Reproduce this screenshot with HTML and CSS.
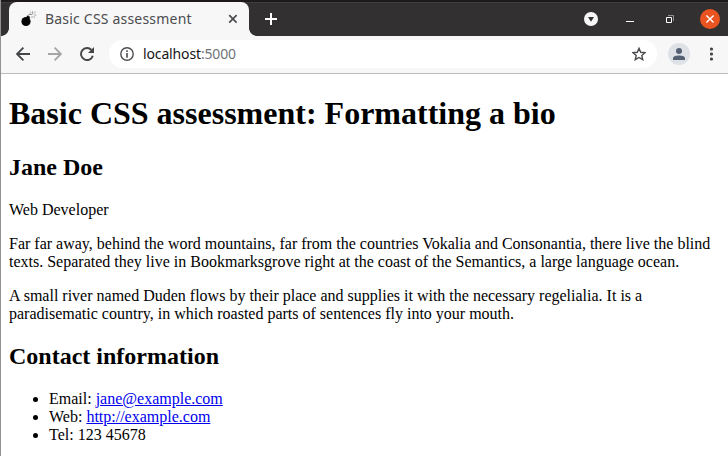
FILE: index.html
```html
<!DOCTYPE html>
<html lang="en">
<head>
<meta charset="utf-8">
<title>Basic CSS assessment</title>
<link rel="stylesheet" href="styles.css">
</head>
<body>
<div class="window">
  <header class="tabstrip">
    <div class="edge edge-left"></div>
    <div class="tab">
      <svg class="favicon" width="16" height="16" viewBox="0 0 16 16">
        <circle cx="5" cy="10.5" r="4.6" fill="#050505"/>
        <path d="M6 4.5l3 1.2-.6 2.3-3-1.5z" fill="#050505"/>
        <path d="M7.2 4.7Q8 2 10.7 3.6" fill="none" stroke="#777" stroke-width="1"/>
        <path d="M11.5 3.5V0M12.5 2.5l2.3-1.8M13 4h2.5M12.5 5l1.5 2M10.5 2L9 .8M11 5v2" stroke="#999" stroke-width=".8"/>
      </svg>
      <span class="tab-title">Basic CSS assessment</span>
      <svg class="tab-close" width="10" height="10" viewBox="0 0 10 10"><path d="M1.2 1.2l7.4 7.4M8.6 1.2L1.2 8.6" stroke="#4b4c4f" stroke-width="1.7"/></svg>
    </div>
    <div class="edge edge-right"></div>
    <svg class="new-tab" width="12" height="12" viewBox="0 0 12 12"><path d="M6 0v12M0 6h12" stroke="#fff" stroke-width="2"/></svg>
    <div class="controls">
      <svg width="14" height="14" viewBox="0 0 14 14"><circle cx="7" cy="7" r="7" fill="#f7f7f7"/><path d="M4 5h6L7 9.7z" fill="#333031"/></svg>
      <svg class="minimize" width="8" height="1" viewBox="0 0 8 1"><path d="M0 0h8v1H0z" fill="#fff"/></svg>
      <svg class="restore" width="8" height="8" viewBox="0 0 8 8"><path d="M2 .5h5.5V6" fill="none" stroke="#929091"/><path d="M.5 2.5h5v5h-5z" fill="none" stroke="#fff"/></svg>
      <svg class="close" width="20" height="20" viewBox="0 0 20 20"><circle cx="10" cy="10" r="10" fill="#e95420"/><path d="M6.4 6.4l7.2 7.2M13.6 6.4l-7.2 7.2" stroke="#fff" stroke-width="1.4"/></svg>
    </div>
  </header>
  <nav class="toolbar">
    <svg class="back" width="14" height="14" viewBox="0 0 14 14"><path d="M14 7H1.5M7.4.7L1.1 7l6.3 6.3" fill="none" stroke="#444547" stroke-width="1.8"/></svg>
    <svg class="forward" width="14" height="14" viewBox="0 0 14 14"><path d="M0 7h12.5M6.6.7L12.9 7l-6.3 6.3" fill="none" stroke="#a4a5a6" stroke-width="1.8"/></svg>
    <svg class="reload" width="14" height="14" viewBox="0 0 14 14"><path d="M12.8 8.7A6 6 0 1 1 11.5 3" fill="none" stroke="#444547" stroke-width="1.9"/><path d="M14 0v6H8z" fill="#444547"/></svg>
    <div class="address">
      <svg class="info" width="14" height="14" viewBox="0 0 14 14"><circle cx="7" cy="7" r="6.2" fill="none" stroke="#4c4d50" stroke-width="1.4"/><path d="M7 3.3v1.6M7 6v4.8" stroke="#4c4d50" stroke-width="1.6"/></svg>
      <span class="url">localhost<span class="port">:5000</span></span>
      <svg class="star" width="14" height="14" viewBox="0 0 14 14"><path d="M7 1.3l1.7 4 4.3.4-3.2 2.8.95 4.2L7 10.5l-3.75 2.2.95-4.2L1 5.7l4.3-.4z" fill="none" stroke="#4b4c4f" stroke-width="1.4"/></svg>
    </div>
    <svg class="avatar" width="22" height="22" viewBox="0 0 22 22"><circle cx="11" cy="11" r="11" fill="#dee1e6"/><circle cx="11" cy="8" r="3" fill="#556073"/><path d="M5 17v-1.6C5 13.1 8.5 12.5 11 12.5s6 .6 6 2.9V17z" fill="#556073"/></svg>
    <svg class="menu" width="4" height="14" viewBox="0 0 4 14"><g fill="#444547"><circle cx="1.5" cy="2" r="1.6"/><circle cx="1.5" cy="7" r="1.6"/><circle cx="1.5" cy="12" r="1.6"/></g></svg>
  </nav>
  <main class="page">
    <h1>Basic CSS assessment: Formatting a bio</h1>
    <h2>Jane Doe</h2>
    <p>Web Developer</p>
    <p>Far far away, behind the word mountains, far from the countries Vokalia and Consonantia, there live the blind texts. Separated they live in Bookmarksgrove right at the coast of the Semantics, a large language ocean.</p>
    <p>A small river named Duden flows by their place and supplies it with the necessary regelialia. It is a paradisematic country, in which roasted parts of sentences fly into your mouth.</p>
    <h2>Contact information</h2>
    <ul>
      <li>Email: <a href="mailto:jane@example.com">jane@example.com</a></li>
      <li>Web: <a href="http://example.com">http://example.com</a></li>
      <li>Tel: 123 45678</li>
    </ul>
  </main>
</div>
</body>
</html>
```
FILE: styles.css
```css
* {
  box-sizing: border-box;
}

body {
  margin: 0;
  background: #fff;
}

svg {
  display: block;
  flex: none;
}

.window {
  height: 456px;
  overflow: hidden;
  border-left: 1px solid #929292;
}

.tabstrip {
  display: flex;
  height: 36px;
  padding-top: 2px;
  background: #333031;
  box-shadow: inset 0 2px #1e1a1b, inset 0 3px #403d3e;
}

.edge {
  align-self: flex-end;
  width: 8px;
  height: 8px;
}

.edge-left {
  background: radial-gradient(circle at 0 0, #333031 7.5px, #f7f7f7 8.3px);
}

.edge-right {
  background: radial-gradient(circle at 100% 0, #333031 7.5px, #f7f7f7 8.3px);
}

.tab {
  display: flex;
  align-items: center;
  width: 240px;
  padding: 0 11px 0 12px;
  background: #f7f7f7;
  border-radius: 8px 8px 0 0;
}

.tab-title,
.url {
  font-family: "Noto Sans", sans-serif;
  white-space: nowrap;
}

.tab-title {
  margin-left: 8px;
  font-size: 14px;
  line-height: 20px;
  letter-spacing: 0.2px;
  color: #4b4c4f;
}

.tab-close {
  margin-left: auto;
}

.new-tab {
  align-self: center;
  margin-left: 8px;
}

.controls {
  display: flex;
  align-items: center;
  margin-left: auto;
  margin-right: 8px;
}

.minimize {
  margin: 4px 0 0 28px;
}

.restore {
  margin-left: 32px;
}

.close {
  margin-left: 26px;
}

.toolbar {
  display: flex;
  align-items: center;
  height: 38px;
  padding: 0 14px 1px 15px;
  background: #f7f7f7;
  border-bottom: 1px solid #bdbdbd;
}

.forward,
.reload {
  margin-left: 18px;
}

.address {
  display: flex;
  align-items: center;
  flex: 1;
  height: 28px;
  margin-left: 15px;
  padding: 0 11px;
  border-radius: 14px;
  background: #fff;
}

.url {
  margin-left: 9px;
  font-size: 14px;
  line-height: 20px;
  letter-spacing: -0.14px;
  color: #151515;
}

.port {
  color: #707378;
}

.star {
  margin-left: auto;
}

.avatar {
  margin-left: 11px;
}

.menu {
  margin-left: 20px;
}

.page {
  display: flow-root;
  padding: 0 8px;
  font: 16px "Liberation Serif", serif;
  color: #000;
}
```
